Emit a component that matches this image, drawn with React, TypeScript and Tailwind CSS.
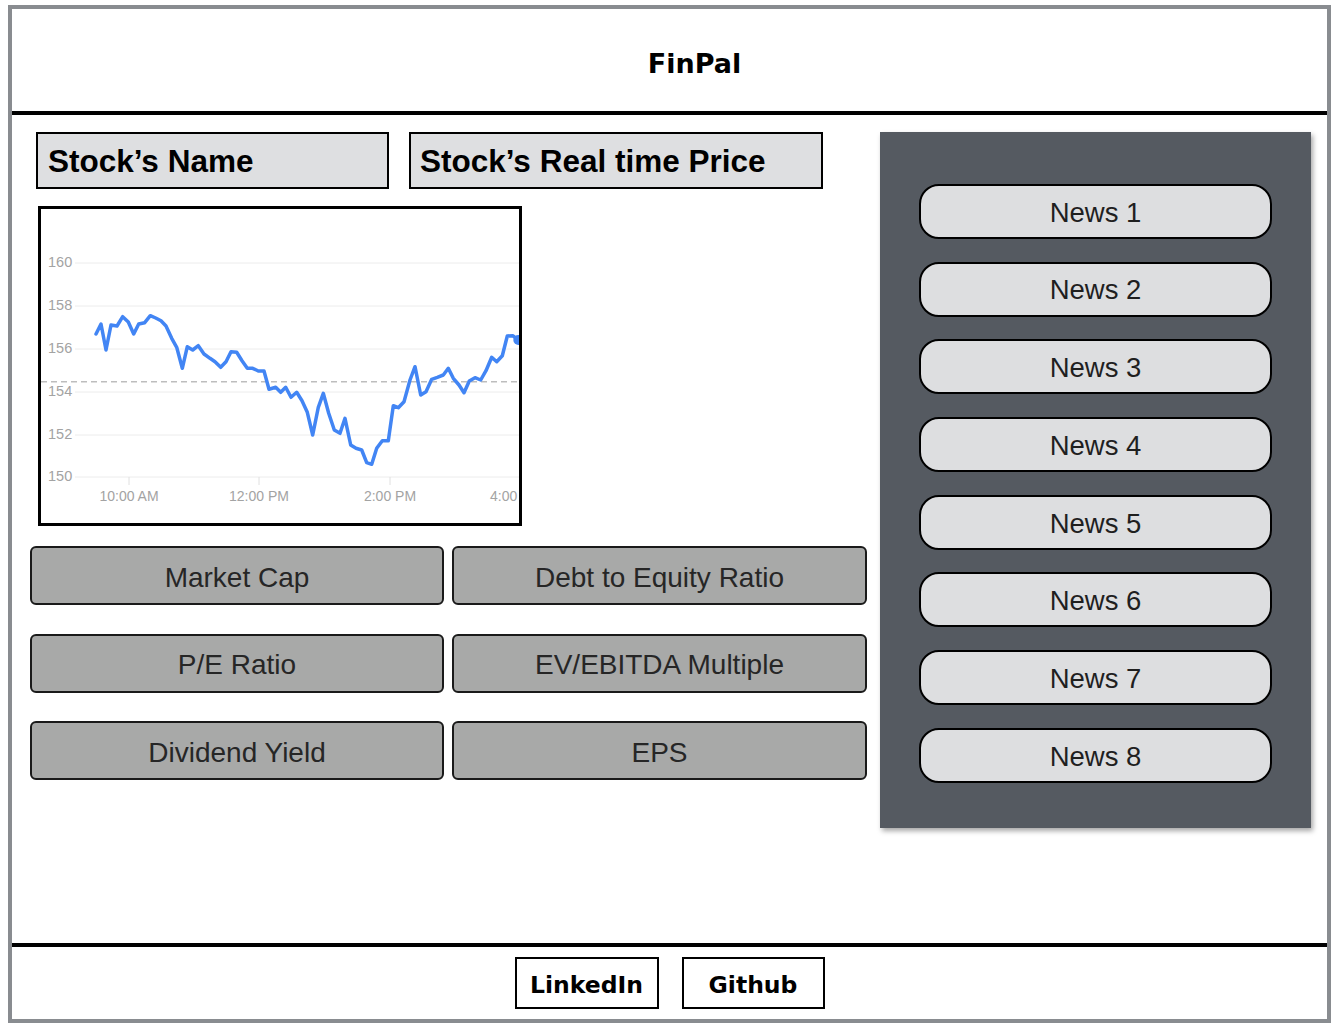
import React from 'react';

const METRICS = [
  'Market Cap',
  'Debt to Equity Ratio',
  'P/E Ratio',
  'EV/EBITDA Multiple',
  'Dividend Yield',
  'EPS',
];

const NEWS = ['News 1', 'News 2', 'News 3', 'News 4', 'News 5', 'News 6', 'News 7', 'News 8'];

// price trace, traced off the reference at 3x scale
const RAW: [number, number][] = [
  [198, 402], [213, 372], [228, 450], [243, 375], [261, 378], [278, 350], [295, 366],
  [311, 402], [326, 372], [344, 368], [361, 347], [377, 354], [393, 362], [408, 378],
  [425, 415], [440, 442], [457, 505], [472, 440], [488, 450], [505, 437], [522, 462],
  [540, 475], [555, 485], [572, 502], [588, 485], [603, 455], [620, 457], [636, 482],
  [652, 505], [668, 505], [685, 513], [702, 513], [717, 568], [737, 562], [752, 577],
  [767, 562], [783, 592], [800, 577], [816, 602], [832, 637], [848, 705], [865, 622],
  [880, 580], [896, 640], [913, 690], [930, 700], [945, 655], [962, 735], [978, 745],
  [995, 750], [1010, 788], [1025, 793], [1040, 745], [1057, 722], [1075, 722],
  [1090, 617], [1105, 623], [1122, 605], [1140, 540], [1155, 500], [1172, 585],
  [1188, 575], [1205, 538], [1222, 532], [1240, 525], [1255, 505], [1270, 535],
  [1287, 555], [1302, 578], [1318, 543], [1335, 533], [1352, 540], [1368, 512],
  [1385, 472], [1400, 485], [1417, 467], [1432, 408], [1448, 407], [1465, 420],
];

const GRID = [
  { y: 54, label: '160' },
  { y: 97, label: '158' },
  { y: 140, label: '156' },
  { y: 183, label: '154' },
  { y: 226, label: '152' },
  { y: 268, label: '150' },
];

const TICKS = [
  { x: 88, label: '10:00 AM', anchor: 'middle' },
  { x: 218, label: '12:00 PM', anchor: 'middle' },
  { x: 349, label: '2:00 PM', anchor: 'middle' },
  // last label sits at the plot edge, only its time part shows
  { x: 449, label: '4:00', anchor: 'start' },
];

function PriceChart() {
  const pts = RAW.map(([x, y]) => `${(x / 3 - 11).toFixed(1)},${(y / 3 - 9).toFixed(1)}`).join(' ');
  const last = RAW[RAW.length - 1];
  return (
    <svg width="478" height="314" viewBox="0 0 478 314" className="block overflow-hidden">
      {GRID.map((g) => (
        <g key={g.label}>
          <line x1="34" x2="478" y1={g.y} y2={g.y} stroke="#ececec" strokeWidth="1" />
          <text
            x="7"
            y={g.y}
            dominantBaseline="middle"
            fill="#a3a3a3"
            fontSize="14.5"
            fontFamily="'Liberation Sans', Arial, sans-serif"
          >
            {g.label}
          </text>
        </g>
      ))}
      {TICKS.map((t, i) => (
        <g key={t.label}>
          <line
            x1={i === 3 ? 479 : t.x}
            x2={i === 3 ? 479 : t.x}
            y1="268"
            y2="276"
            stroke="#e0e0e0"
            strokeWidth="1"
          />
          <text
            x={t.x}
            y="288"
            textAnchor={t.anchor}
            dominantBaseline="middle"
            fill="#a3a3a3"
            fontSize="14"
            fontFamily="'Liberation Sans', Arial, sans-serif"
          >
            {t.label}
          </text>
        </g>
      ))}
      <line x1="0" x2="478" y1="172.7" y2="172.7" stroke="#bdbdbd" strokeWidth="1.5" strokeDasharray="6 4" />
      <polyline points={pts} fill="none" stroke="#4285f4" strokeWidth="3.5" strokeLinejoin="round" strokeLinecap="round" />
      <circle cx={last[0] / 3 - 11} cy={last[1] / 3 - 9} r="5" fill="#4285f4" />
    </svg>
  );
}

export default function App() {
  return (
    <div className="w-[1338px] h-[1034px] bg-white pl-2 pt-[5px] font-['Liberation_Sans',Arial,sans-serif]">
      <div className="w-[1323px] h-[1018px] border-4 border-[#898c90] flex flex-col">
        {/* Header */}
        <header className="h-[106px] shrink-0 border-b-4 border-black flex items-center justify-center pt-[6px] pl-[50px]">
          <h1 className="font-['DejaVu_Sans',Verdana,sans-serif] font-bold text-[27px] text-black leading-none">
            FinPal
          </h1>
        </header>

        {/* Main */}
        <main className="flex-1 flex">
          <div className="w-[868px] shrink-0 flex flex-col">
            <div className="flex mt-[17px] ml-6 gap-5">
              <div className="w-[353px] h-[57px] border-2 border-black bg-[#dedfe1] flex items-center pl-[10px] pt-[3px]">
                <span className="font-bold text-[31.5px] text-black leading-none">Stock’s Name</span>
              </div>
              <div className="w-[414px] h-[57px] border-2 border-black bg-[#dedfe1] flex items-center pl-[9px] pt-[3px]">
                <span className="font-bold text-[31.5px] text-black leading-none">Stock’s Real time Price</span>
              </div>
            </div>

            <div className="mt-[17px] ml-[26px] w-[484px] h-[320px] border-[3px] border-black bg-white overflow-hidden">
              <PriceChart />
            </div>

            <div className="mt-5 ml-[18px] grid grid-cols-[414px_415px] gap-x-2 gap-y-[28.5px]">
              {METRICS.map((m) => (
                <div
                  key={m}
                  className="h-[59px] rounded-[6px] border-2 border-[#1a1a1a] bg-[#a8a9a8] flex items-center justify-center pt-[4px]"
                >
                  <span className="text-[28px] text-[#262626] leading-none">{m}</span>
                </div>
              ))}
            </div>
          </div>

          <aside className="mt-[17px] w-[431px] h-[696px] bg-[#555a61] shadow-[2px_3px_5px_rgba(0,0,0,0.35)] pt-[52px] pl-[39px] flex flex-col gap-[22.7px]">
            {NEWS.map((n) => (
              <div
                key={n}
                className="w-[353px] h-[55px] rounded-[20px] border-2 border-black bg-[#dddee0] flex items-center justify-center pt-[2px]"
              >
                <span className="text-[27.5px] text-[#1f1f1f] leading-none">{n}</span>
              </div>
            ))}
          </aside>
        </main>

        {/* Footer */}
        <footer className="h-[76px] shrink-0 border-t-4 border-black flex items-center justify-center gap-[23px]">
          <div className="w-[144px] h-[52px] border-2 border-black flex items-center justify-center pt-[5px]">
            <span className="font-['DejaVu_Sans',Verdana,sans-serif] font-bold text-[23.5px] text-black leading-none">
              LinkedIn
            </span>
          </div>
          <div className="w-[143px] h-[52px] border-2 border-black flex items-center justify-center pt-[5px]">
            <span className="font-['DejaVu_Sans',Verdana,sans-serif] font-bold text-[23.5px] text-black leading-none">
              Github
            </span>
          </div>
        </footer>
      </div>
    </div>
  );
}
